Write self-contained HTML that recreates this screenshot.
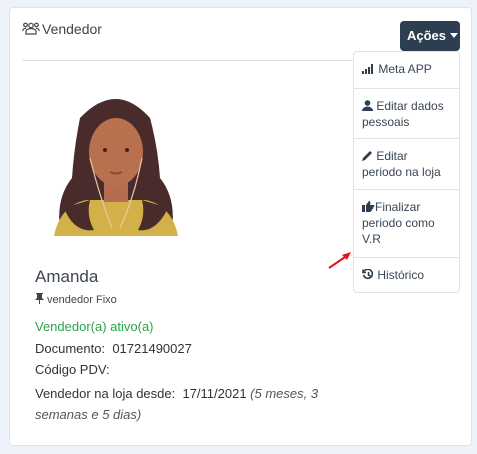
<!DOCTYPE html>
<html><head><style>
*{margin:0;padding:0;box-sizing:border-box}
body{width:477px;height:454px;background:#eef2fb;font-family:"Liberation Sans",sans-serif;position:relative;overflow:hidden;color:#333}
.card{position:absolute;left:9px;top:7px;width:463px;height:439px;background:#fff;border:1px solid #dfe3ea;border-radius:4px}
.abs{position:absolute}
.hdr{left:22px;top:21px;font-size:14px;color:#3c4650}
.line{left:22px;top:60px;width:438px;height:1px;background:#dde1e6}
.btn{left:400px;top:21px;width:60px;height:30px;background:#2c3e50;border-radius:4px;color:#fff;font-size:13px;font-weight:bold;line-height:30px;padding-left:7px}
.dd{left:353px;top:51px;width:107px;height:242px;background:#fff;border:1px solid #dfe3ea;border-radius:4px}
.it{position:absolute;left:0;width:105px;border-bottom:1px solid #dfe3ea;font-size:12px;line-height:16px;padding:9px 11px 0 8px;color:#3a4654}
.t{font-size:13px;color:#333;left:35px}
svg.i{vertical-align:-1px}
</style></head><body>
<div class="card"></div>
<div class="abs hdr"><svg width="18" height="13" viewBox="0 0 18 13" style="vertical-align:-1px;margin-right:2px" fill="none" stroke="#444" stroke-width="1.2"><circle cx="3.5" cy="3" r="1.8"/><circle cx="9" cy="3.5" r="2.2"/><circle cx="14.5" cy="3" r="1.8"/><path d="M4 12v-2.5a5 3 0 0 1 10 0V12z"/><path d="M1 9a2.5 2 0 0 1 3-2.5M17 9a2.5 2 0 0 0-3-2.5"/></svg>Vendedor</div>
<div class="abs line"></div>
<div class="abs btn">Ações <span style="display:inline-block;border-left:4px solid transparent;border-right:4px solid transparent;border-top:5px solid #fff;vertical-align:2px"></span></div>
<div class="abs dd">
<div class="it" style="top:0;height:37px"><svg class="i" width="13" height="11" viewBox="0 0 13 11"><g fill="#2c3e50"><rect x="0" y="8" width="2" height="3"/><rect x="3" y="6" width="2" height="5"/><rect x="6" y="4" width="2" height="7"/><rect x="9" y="1" width="2" height="10"/></g></svg> Meta APP</div>
<div class="it" style="top:37px;height:50px"><svg class="i" width="11" height="11" viewBox="0 0 11 11"><circle cx="5.5" cy="3" r="2.8" fill="#2c3e50"/><path d="M0 11a5.5 4.5 0 0 1 11 0z" fill="#2c3e50"/></svg> Editar dados pessoais</div>
<div class="it" style="top:87px;height:51px"><svg class="i" width="11" height="11" viewBox="0 0 11 11"><path d="M0 11l1-3 7-7 2 2-7 7z" fill="#2c3e50"/></svg> Editar periodo na loja</div>
<div class="it" style="top:138px;height:68px"><svg class="i" width="13" height="11" viewBox="0 0 13 11"><rect x="0" y="4" width="3" height="7" fill="#2c3e50"/><path d="M4 4l3-4c1 0 2 1 1 4h4c1 1 0 2-1 2 1 1 0 2-1 2 0 1 0 2-1 2 0 1-1 1-2 1H4z" fill="#2c3e50"/></svg>Finalizar periodo como V.R</div>
<div class="it" style="top:206px;height:35px;border:0"><svg class="i" width="12" height="11" viewBox="0 0 12 11" fill="none" stroke="#2c3e50" stroke-width="1.6"><path d="M2 2.5A4.5 4.5 0 1 1 1.5 6"/><path d="M1 0.5v3h3" /><path d="M6.5 3v3l2 1"/></svg> Histórico</div>
</div>
<svg class="abs" style="left:326px;top:248px" width="28" height="24"><path d="M3 20L22 7" stroke="#e4161b" stroke-width="2"/><path d="M25 4L16 7L21 12z" fill="#e4161b"/></svg>
<svg class="abs" style="left:50px;top:88px" width="132" height="148" viewBox="0 0 132 148">
<path d="M30 30Q66 -8 100 30Q108 60 110 90Q126 110 122 140L10 140Q6 110 22 90Q24 60 30 30z" fill="#4a2b2b"/>
<path d="M4 148Q10 118 36 112L96 112Q122 118 128 148z" fill="#d2b04a"/>
<path d="M14 120Q24 145 44 142Q36 128 40 112zM118 120Q106 145 88 142Q96 128 92 112z" fill="#4a2b2b"/>
<rect x="54" y="88" width="24" height="26" fill="#b56d4f"/>
<ellipse cx="66" cy="64" rx="27" ry="34" fill="#b9704f"/>
<path d="M38 40Q66 10 94 40L94 30Q66 0 38 30z" fill="#4a2b2b"/>
<circle cx="55" cy="62" r="2" fill="#3a1f1f"/><circle cx="77" cy="62" r="2" fill="#3a1f1f"/>
<path d="M60 84Q66 87 72 84" stroke="#8a4a35" stroke-width="2" fill="none"/>
<path d="M40 70Q50 110 62 140M92 70Q84 110 70 140" stroke="#e8c8a8" stroke-width="1.2" fill="none"/>
</svg>
<div class="abs" style="left:35px;top:267px;font-size:17px;color:#3c4650">Amanda</div>
<div class="abs" style="left:35px;top:293px;font-size:11px;color:#3c4650"><svg width="9" height="11" viewBox="0 0 9 11" style="vertical-align:-1px"><path d="M1 0h7v1H7v4l2 2H0l2-2V1H1z M4 7h1v4H4z" fill="#3c4650"/></svg> vendedor Fixo</div>
<div class="abs t" style="top:319px;color:#28a745">Vendedor(a) ativo(a)</div>
<div class="abs t" style="top:341px">Documento:&nbsp; 01721490027</div>
<div class="abs t" style="top:362px">Código PDV:</div>
<div class="abs t" style="top:383px;line-height:21px;width:320px">Vendedor na loja desde:&nbsp; 17/11/2021 <i style="color:#555">(5 meses, 3 semanas e 5 dias)</i></div>
</body></html>
